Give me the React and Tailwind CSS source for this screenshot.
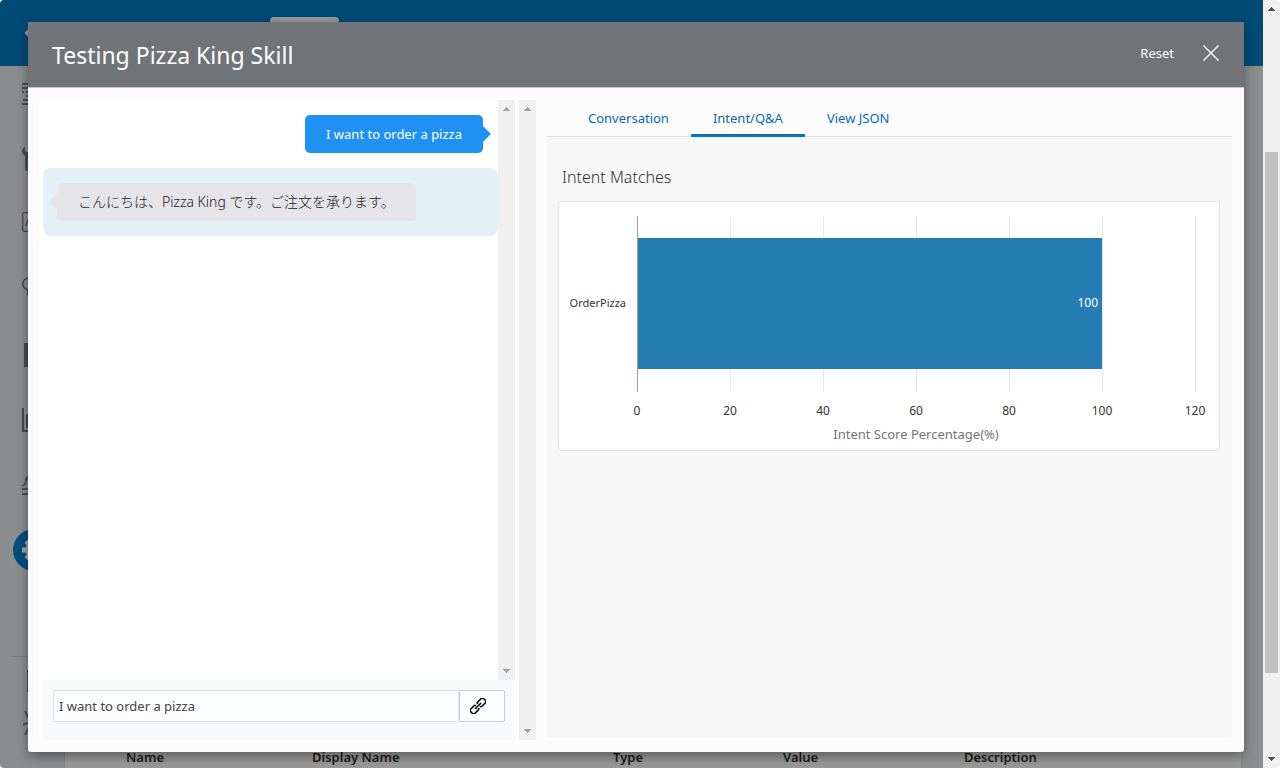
import React from "react";

const COLUMNS = [
  { label: "Name", width: "w-[186px]" },
  { label: "Display Name", width: "w-[301px]" },
  { label: "Type", width: "w-[170px]" },
  { label: "Value", width: "w-[181px]" },
  { label: "Description", width: "" },
];

const TABS = [
  { label: "Conversation", active: false },
  { label: "Intent/Q&A", active: true },
  { label: "View JSON", active: false },
];

const TICKS = [0, 20, 40, 60, 80, 100, 120];

function Arrow({ down, className }) {
  return (
    <svg width="7" height="4" viewBox="0 0 7 4" shapeRendering="crispEdges" className={className} aria-hidden="true">
      <path
        d={down ? "M0 0h7v1H0zM1 1h5v1H1zM2 2h3v1H2zM3 3h1v1H3z" : "M3 0h1v1H3zM2 1h3v1H2zM1 2h5v1H1zM0 3h7v1H0z"}
        fill="currentColor"
      />
    </svg>
  );
}

function ScrollTrack() {
  return (
    <div className="flex w-[17px] shrink-0 flex-col items-center justify-between bg-[#f0f0f0] py-[7px] text-[#a3a3a3]">
      <Arrow />
      <Arrow down />
    </div>
  );
}

function NavItem({ label, className, children }) {
  return (
    <a href="#" aria-label={label} className={`flex items-center justify-center ${className}`}>
      {children}
    </a>
  );
}

function Sidebar() {
  return (
    <nav className="flex w-16 shrink-0 flex-col bg-[#8c8d8f] text-[#4b4c4e]">
      <NavItem label="Flows" className="mt-4 h-6 pl-1">
        <svg width="24" height="24" viewBox="0 0 24 24" stroke="currentColor" strokeWidth="2" shapeRendering="crispEdges">
          <path d="M0 2h22M0 6h22M0 10h2M4 10h18M4 14h18M1 18h21M0 22h22" />
        </svg>
      </NavItem>
      <NavItem label="Tools" className="mt-[41px] h-6 pl-1">
        <svg width="24" height="24" viewBox="0 0 24 24" fill="currentColor">
          <path d="M3 0C0 1-1 5 1 7l2 2v12c0 2 1 3 3 3s3-1 3-3V9l2-2c2-2 1-6-2-7v5H5L3 4zM6 20a1 1 0 110 2 1 1 0 010-2z" fillRule="evenodd" />
        </svg>
      </NavItem>
      <NavItem label="Translations" className="mt-[39px] h-6 pl-1">
        <svg width="24" height="24" viewBox="0 0 24 24" fill="none" stroke="currentColor" strokeWidth="1.3">
          <rect x=".7" y="2.7" width="22" height="18.6" rx="1.5" />
          <path d="M3.5 16L7.5 6l4 10M5 12.5h5" />
        </svg>
      </NavItem>
      <NavItem label="Q&A" className="mt-10 h-6 pl-1">
        <svg width="24" height="24" viewBox="0 0 24 24" fill="none" stroke="currentColor" strokeWidth="1.5">
          <path d="M9 3.5C3 3.500 .8 7 .8 10s2 4.500 4.200 5.500c1 1.500 1 2.500 .5 5 2-.5 3-2 4-4.500h4c5 0 7-3 7-6s-2-6.500-7-6.500z" />
        </svg>
      </NavItem>
      <NavItem label="Pages" className="mt-[45px] h-6 pl-1">
        <svg width="24" height="24" viewBox="0 0 24 24" fill="currentColor">
          <path d="M2 0h20v24H2z" />
        </svg>
      </NavItem>
      <NavItem label="Insights" className="mt-[41px] h-6 pl-1">
        <svg width="24" height="24" viewBox="0 0 24 24" fill="currentColor" shapeRendering="crispEdges">
          <path d="M0 0h2v22h22v2H0zM4 6h4v14H4zM10 2h4v18h-4zM16 9h4v11h-4z" />
        </svg>
      </NavItem>
      <NavItem label="Quality" className="mt-[42px] h-6 pl-1">
        <svg width="24" height="24" viewBox="0 0 24 24" fill="none" stroke="currentColor" strokeWidth="1.6">
          <path d="M0 11c2 1 3.500-1 4-3.500L5.200 3H8M3 5h6" />
          <path d="M0 15h22M0 20h22" strokeWidth="2" shapeRendering="crispEdges" />
        </svg>
      </NavItem>
      <NavItem label="Settings" className="mt-[31px] ml-[13px] size-[42px] rounded-full bg-[#004f80] text-[#a2a3a5]">
        <svg width="24" height="24" viewBox="0 0 24 24" fill="currentColor">
          <path
            fillRule="evenodd"
            d="M10 0h4v3l2 1 2.500-2.200 3 3L19.500 7.500l1 2H24v5h-3.500l-1 2 2 2.700-3 3L16 20l-2 1v3h-4v-3l-2-1-2.500 2.200-3-3L4.500 16.500l-1-2H0v-5h3.500l1-2L2.500 4.800l3-3L8 4l2-1zM12 8a4 4 0 100 8 4 4 0 000-8z"
          />
        </svg>
      </NavItem>
      <div className="mt-[85px] ml-3 border-t border-[#7d7e80]" />
      <NavItem label="Notes" className="mt-3 h-6 pl-1">
        <svg width="14" height="22" viewBox="0 0 14 22" fill="none" stroke="currentColor" strokeWidth="2">
          <path d="M1 1h12v20H1z" />
        </svg>
      </NavItem>
      <NavItem label="Debug" className="mt-[18px] h-6 pl-1">
        <svg width="22" height="24" viewBox="0 0 22 24" fill="none" stroke="currentColor" strokeWidth="1.8">
          <path d="M2 0l3 6 3 3M0 14c2-2 4-2 8-2M2 24l3-6 3-2M20 0l-3 6-3 3M22 14c-2-2-4-2-8-2M20 24l-3-6-3-2" />
          <ellipse cx="11" cy="13" rx="4" ry="7" />
        </svg>
      </NavItem>
    </nav>
  );
}

function BackgroundPage() {
  return (
    <div className="absolute inset-0 flex flex-col">
      <header className="flex h-[66px] shrink-0 items-start bg-[#004a76]">
        <button type="button" aria-label="Back" className="mt-6 ml-6 text-[#a0a0a0]">
          <svg width="12" height="18" viewBox="0 0 12 18" fill="none" stroke="currentColor" strokeWidth="3">
            <path d="M10 1L2.500 9l7.500 8" />
          </svg>
        </button>
        <div className="mt-[17px] ml-[234px] h-8 w-[69px] rounded-sm bg-[#979797]" />
      </header>
      <div className="flex min-h-0 flex-1">
        <Sidebar />
        <main className="flex min-w-0 flex-1 flex-col justify-end border-l border-[#7f8082] bg-[#8c8d8f] pr-[21px]">
          <div className="flex flex-1 flex-col justify-end border-r border-[#828385] bg-[#989898]">
            <table className="w-full table-fixed text-left text-[13px] leading-5 text-[#1b1b1b]">
              <thead>
                <tr>
                  <th className="w-[61px] p-0" aria-label="Select" />
                  {COLUMNS.map((c) => (
                    <th key={c.label} className={`p-0 pb-px font-semibold ${c.width}`}>
                      {c.label}
                    </th>
                  ))}
                </tr>
              </thead>
            </table>
          </div>
        </main>
      </div>
    </div>
  );
}

function ChatPane() {
  return (
    <section className="flex w-[476px] shrink-0 flex-col bg-white pl-1">
      <div className="flex min-h-0 flex-1">
        <div className="flex min-w-0 flex-1 flex-col gap-[15px] pt-[15px]">
          <div className="relative mr-[15px] flex h-[38px] items-center self-end rounded-[5px] bg-[#1f91f3] px-[21px] pt-px text-[13px] text-white">
            I want to order a pizza
            <svg className="absolute top-[11px] left-full" width="8" height="16" viewBox="0 0 8 16" fill="#1f91f3" aria-hidden="true">
              <path d="M0 0l8 8-8 8z" />
            </svg>
          </div>
          <div className="flex rounded-lg bg-[#e3f0f8] py-[15px] pl-[14px]">
            <div className="relative flex h-[38px] items-center rounded-[5px] bg-[#e5e4e9] px-[21px] text-sm font-light text-[#222]">
              こんにちは、Pizza King です。ご注文を承ります。
              <svg className="absolute top-[11px] right-full" width="8" height="16" viewBox="0 0 8 16" fill="#e5e4e9" aria-hidden="true">
                <path d="M8 0L0 8l8 8z" />
              </svg>
            </div>
          </div>
        </div>
        <ScrollTrack />
      </div>
      <form className="flex h-[60px] items-start bg-[#f8f9fb] px-[10px] pt-[10px]" onSubmit={(e) => e.preventDefault()}>
        <input
          type="text"
          aria-label="Message"
          defaultValue="I want to order a pizza"
          className="h-8 min-w-0 flex-1 rounded-xs border border-[#dfe2e5] bg-[#fcfdfe] px-[5px] text-[13px] text-[#444] outline-none"
        />
        <button
          type="button"
          aria-label="Attach"
          className="flex h-8 w-[46px] items-center rounded-xs border border-[#c4ced7] bg-[#fcfdfe] pl-[10px] text-black"
        >
          <svg width="16" height="16" viewBox="0 0 16 16" fill="none" stroke="currentColor" strokeWidth="1.6">
            <g transform="rotate(-45 8 8)">
              <path d="M6.600 9.600V10q0 1-1.200 1H.4Q-1.200 11-1.200 9.400V6.600Q-1.200 5 .4 5h5q1.200 0 1.200 1v.4" />
              <path d="M9.400 6.400V6q0-1 1.200-1h5q1.600 0 1.600 1.600v2.800q0 1.600-1.600 1.600h-5q-1.200 0-1.200-1v-.4" />
              <path d="M3.800 8h8.400" />
            </g>
          </svg>
        </button>
      </form>
    </section>
  );
}

function IntentChart() {
  return (
    <svg viewBox="0 0 660 248" className="block w-full" role="img" aria-label="Intent scores">
      <g shapeRendering="crispEdges">
        {TICKS.map((t, i) => (
          <rect key={t} x={78 + i * 93} y="14" width="1" height="176" fill={i === 0 ? "#9e9e9e" : "#e5e6e9"} />
        ))}
        <rect x="79" y="36" width="464" height="131" fill="#267db3" />
      </g>
      <g fontSize="12" fill="#333">
        <text x="67" y="105" fontSize="11" textAnchor="end">OrderPizza</text>
        <text x="539" y="105" textAnchor="end" fill="#fff">100</text>
        {TICKS.map((t, i) => (
          <text key={t} x={78 + i * 93} y="213" textAnchor="middle">{t}</text>
        ))}
      </g>
      <text x="357" y="237" fontSize="13" textAnchor="middle" fill="#757575">Intent Score Percentage(%)</text>
    </svg>
  );
}

function ResultPane() {
  return (
    <section className="mr-3 mb-0.5 ml-[10px] flex min-w-0 flex-1 flex-col">
      <div role="tablist" className="flex h-[37px] items-end border-b border-[#d6dfe6] pl-5">
        {TABS.map((t) => (
          <button
            key={t.label}
            type="button"
            role="tab"
            aria-selected={t.active}
            className={`-mb-px flex h-[37px] items-center border-b-[3px] px-[22px] pt-[3px] text-[13px] text-[#0a67b5] ${
              t.active ? "border-[#0572ce]" : "border-transparent"
            }`}
          >
            {t.label}
          </button>
        ))}
      </div>
      <div className="flex-1 rounded-b bg-[#f7f7f7] px-3 pt-[27px]">
        <h2 className="pl-1 text-base leading-[26px] font-light text-[#333]">Intent Matches</h2>
        <div className="mt-[11px] overflow-hidden rounded border border-[#dfe4eb] bg-white">
          <IntentChart />
        </div>
      </div>
    </section>
  );
}

export default function App() {
  return (
    <div className="flex h-screen overflow-hidden rounded-[4px] font-['Noto_Sans','Noto_Sans_CJK_JP',sans-serif]">
      <div className="relative min-w-0 flex-1">
        <BackgroundPage />
        <div className="absolute inset-0 flex pt-[22px] pr-[19px] pb-4 pl-7">
          <div role="dialog" aria-label="Testing Pizza King Skill" className="flex min-w-0 flex-1 flex-col overflow-hidden rounded-[3px] bg-[#fcfcfc] shadow-[0_4px_12px_rgba(0,0,0,0.4)]">
            <header className="flex h-[66px] shrink-0 items-center border-b border-[#c5c8ca] bg-[#707477] pr-6 pl-6 text-white">
              <h1 className="flex-1 pt-0.5 text-[23px]">Testing Pizza King Skill</h1>
              <div className="flex items-center gap-7 pb-1">
                <button type="button" className="pt-0.5 text-[13px]">Reset</button>
                <button type="button" aria-label="Close">
                  <svg width="18" height="18" viewBox="0 0 18 18" fill="none" stroke="currentColor" strokeWidth="1.4">
                    <path d="M1.500 1.500l15 15M16.500 1.500l-15 15" />
                  </svg>
                </button>
              </div>
            </header>
            <div className="flex min-h-0 flex-1 pt-3 pb-3 pl-[11px]">
              <ChatPane />
              <div className="w-1 shrink-0" />
              <ScrollTrack />
              <ResultPane />
            </div>
          </div>
        </div>
      </div>
      <div className="flex w-[17px] shrink-0 flex-col items-center justify-between bg-[#f0f0f0] py-[7px] text-[#505050]">
        <Arrow />
        <div className="mt-[141px] mb-[84px] w-[13px] flex-1 bg-[#c1c1c1]" />
        <Arrow down />
      </div>
    </div>
  );
}
